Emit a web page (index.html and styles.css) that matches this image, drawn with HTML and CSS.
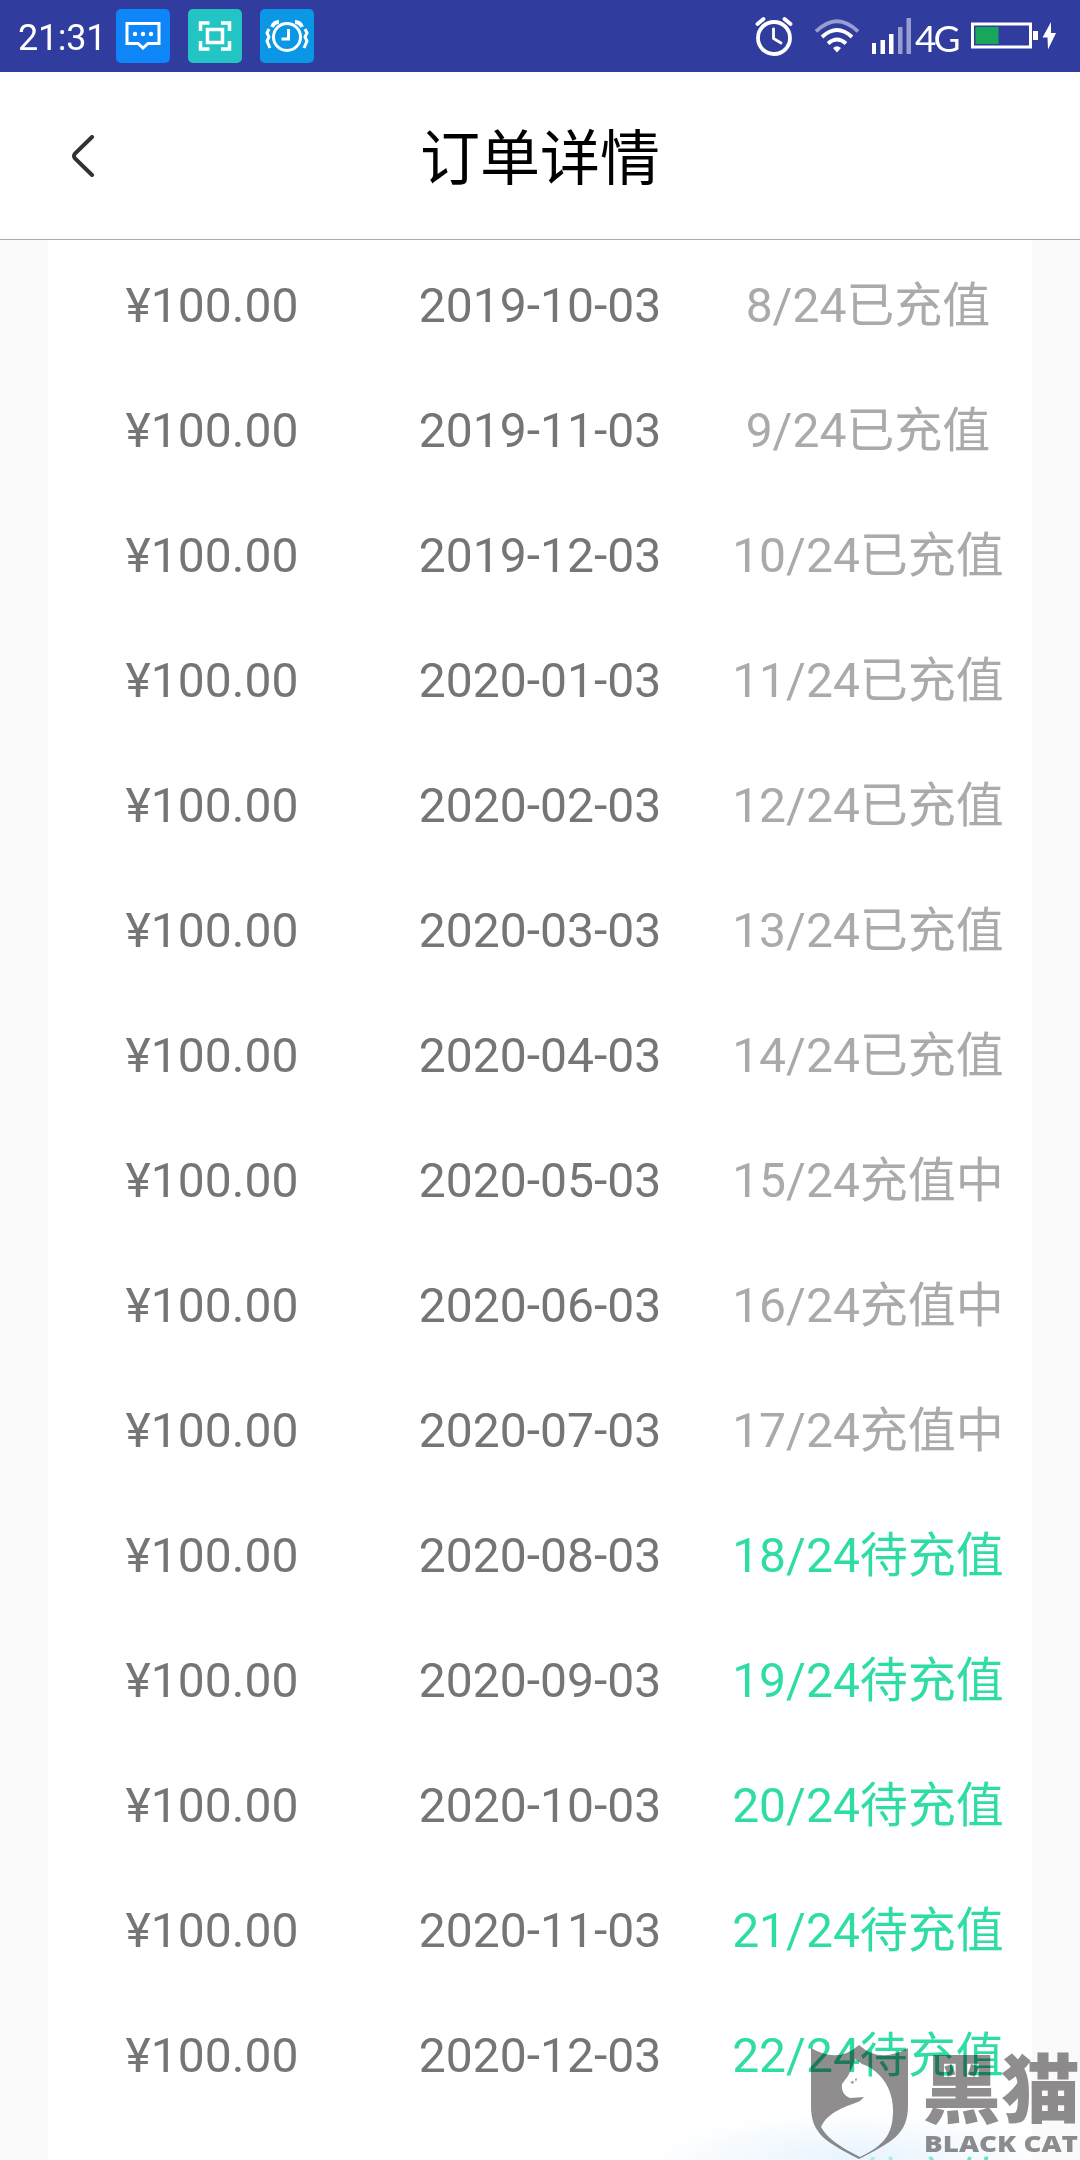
FILE: index.html
```html
<!DOCTYPE html>
<html lang="zh-CN">
<head>
  <meta charset="UTF-8">
  <meta name="viewport" content="width=device-width, initial-scale=1.0">
  <title>订单详情</title>
  <link rel="stylesheet" href="styles.css">
</head>
<body>
  <div class="status-bar">
    <div class="status-left">
      <span class="time">21:31</span>
      <svg class="app-icon" viewBox="0 0 54 54">
        <rect width="54" height="54" rx="5" fill="#0f86f8"/>
        <path d="M11 14.500h32v20h-11l-5 4.500-5-4.500h-11z" fill="none" stroke="#fff" stroke-width="3"/>
        <circle cx="19" cy="25" r="2.200" fill="#fff"/>
        <circle cx="27" cy="25" r="2.200" fill="#fff"/>
        <circle cx="35" cy="25" r="2.200" fill="#fff"/>
      </svg>
      <svg class="app-icon" viewBox="0 0 54 54">
        <rect width="54" height="54" rx="5" fill="#22c4c4"/>
        <g fill="none" stroke="#fff" stroke-width="3.500">
          <path d="M12.500 22v-8h9M33 14h8.500v8M41.500 32v8H33M21.500 40h-9v-8"/>
          <rect x="19.500" y="20.500" width="15" height="13"/>
        </g>
      </svg>
      <svg class="app-icon" viewBox="0 0 54 54">
        <rect width="54" height="54" rx="5" fill="#0a98e6"/>
        <g fill="none" stroke="#fff" stroke-width="3">
          <circle cx="27" cy="28" r="13.500"/>
          <path d="M28.500 20v10h-7"/>
          <path d="M12 18q2-5 7-5M42 18q-2-5-7-5" stroke-width="4"/>
          <path d="M9 20l-2 4 2 4-2 4 3 7M45 20l2 4-2 4 2 4-3 7"/>
        </g>
      </svg>
    </div>
    <div class="status-right">
      <svg class="alarm" viewBox="0 0 38 40">
        <g fill="none" stroke="#fff" stroke-width="3.800" stroke-linecap="round">
          <circle cx="19" cy="22" r="16"/>
          <path d="M18.500 13v9.500l7.500 4.500" stroke-width="2.800"/>
          <path d="M2.500 8l6-5M35.500 8l-6-5"/>
        </g>
      </svg>
      <svg class="wifi" viewBox="0 0 44 34">
        <g fill="none" stroke="#fff" stroke-width="3.800">
          <path d="M1 12.500q21-20.500 42 0" opacity=".5"/>
          <path d="M7 18q15-14 30 0"/>
          <path d="M13 24.500q9-8 18 0"/>
        </g>
        <path d="M18 29q4-3.500 8 0l-4 4.500z" fill="#fff"/>
      </svg>
      <svg class="signal" viewBox="0 0 39 36" fill="#fff">
        <rect x="0" y="25" width="4" height="11"/>
        <rect x="8.500" y="22" width="4.500" height="14"/>
        <rect x="17" y="16" width="4.500" height="20"/>
        <rect x="26" y="9" width="4.500" height="27" opacity=".5"/>
        <rect x="34.500" y="0" width="4.500" height="36" opacity=".5"/>
      </svg>
      <span class="network">4G</span>
      <svg class="battery" viewBox="0 0 85 28">
        <rect x="1.500" y="2" width="58" height="23" fill="none" stroke="#fff" stroke-width="3"/>
        <rect x="4.500" y="5" width="23" height="17" fill="#18a55c"/>
        <rect x="62" y="9" width="5" height="9" fill="#fff"/>
        <path d="M80 0L71.500 15.500h5L77 27.500l8-16.500h-5z" fill="#fff"/>
      </svg>
    </div>
  </div>

  <div class="header">
    <svg class="back" viewBox="0 0 24 42">
      <path d="M21 2L4 18.500q-2 2.500 0 5L21 40" fill="none" stroke="#333" stroke-width="4" stroke-linecap="round"/>
    </svg>
    <h1>订单详情</h1>
  </div>

  <div class="list">
    <div class="row"><span>¥100.00</span><span>2019-10-03</span><span class="done">8/24已充值</span></div>
    <div class="row"><span>¥100.00</span><span>2019-11-03</span><span class="done">9/24已充值</span></div>
    <div class="row"><span>¥100.00</span><span>2019-12-03</span><span class="done">10/24已充值</span></div>
    <div class="row"><span>¥100.00</span><span>2020-01-03</span><span class="done">11/24已充值</span></div>
    <div class="row"><span>¥100.00</span><span>2020-02-03</span><span class="done">12/24已充值</span></div>
    <div class="row"><span>¥100.00</span><span>2020-03-03</span><span class="done">13/24已充值</span></div>
    <div class="row"><span>¥100.00</span><span>2020-04-03</span><span class="done">14/24已充值</span></div>
    <div class="row"><span>¥100.00</span><span>2020-05-03</span><span class="done">15/24充值中</span></div>
    <div class="row"><span>¥100.00</span><span>2020-06-03</span><span class="done">16/24充值中</span></div>
    <div class="row"><span>¥100.00</span><span>2020-07-03</span><span class="done">17/24充值中</span></div>
    <div class="row"><span>¥100.00</span><span>2020-08-03</span><span class="wait">18/24待充值</span></div>
    <div class="row"><span>¥100.00</span><span>2020-09-03</span><span class="wait">19/24待充值</span></div>
    <div class="row"><span>¥100.00</span><span>2020-10-03</span><span class="wait">20/24待充值</span></div>
    <div class="row"><span>¥100.00</span><span>2020-11-03</span><span class="wait">21/24待充值</span></div>
    <div class="row"><span>¥100.00</span><span>2020-12-03</span><span class="wait">22/24待充值</span></div>
    <div class="row"><span>¥100.00</span><span>2021-01-03</span><span class="wait">23/24待充值</span></div>
  </div>

  <div class="glow"></div>
  <svg class="watermark" viewBox="0 0 270 120">
    <path class="shield" d="M1 8Q28 24 49 5Q70 24 98 8V66C98 94 82 102 49 119C16 102 1 94 1 66z"/>
    <path class="cat" d="M45 19l7 5C70 30 83 48 83 70C83 90 78 104 50 117C30 107 17 98 11 87C18 71 38 66 50 61L54 57L40 58C34 56 31 50 32 44L38 36C41 30 43 26 45 19z"/>
    <path class="shield" d="M40 42l4-1-1 3zM45 39l2-1-1 4z"/>
    <text class="name" x="112" y="77" textLength="158" lengthAdjust="spacingAndGlyphs">黑猫</text>
    <text class="brand" x="114" y="112" textLength="154" lengthAdjust="spacingAndGlyphs">BLACK CAT</text>
  </svg>
</body>
</html>
```

FILE: styles.css
```css
body {
  margin: 0;
  height: 2160px;
  overflow: hidden;
  position: relative;
  background-color: #fafafa;
  font-family: Roboto, "Noto Sans CJK SC", sans-serif;
}

.status-bar {
  display: flex;
  justify-content: space-between;
  height: 72px;
  padding: 0 24px 0 18px;
  background-color: #303d9f;
  color: #fff;
}

.status-left,
.status-right {
  display: flex;
  align-items: center;
}

.time {
  width: 98px;
  font-size: 36px;
  line-height: 72px;
  padding-top: 3px;
  letter-spacing: -0.3px;
}

.app-icon {
  width: 54px;
  height: 54px;
  margin-right: 18px;
}

.alarm {
  width: 38px;
  height: 40px;
  margin-right: 22px;
}

.wifi {
  width: 44px;
  height: 34px;
  margin-right: 13px;
}

.signal {
  width: 39px;
  height: 36px;
  margin-right: 4px;
}

.network {
  width: 56px;
  padding-top: 2px;
  font-family: Lato, sans-serif;
  font-size: 37px;
  letter-spacing: -3px;
}

.battery {
  width: 85px;
  height: 28px;
}

.header {
  display: grid;
  grid-template-columns: 72px 1fr 72px;
  align-items: center;
  height: 167px;
  background-color: #fff;
  border-bottom: 1px solid #a9aaaa;
}

.back {
  width: 24px;
  height: 42px;
  margin-left: 71px;
}

h1 {
  margin: 0;
  padding-bottom: 5px;
  text-align: center;
  font-size: 60px;
  font-weight: 400;
  color: #000;
}

.list {
  margin: 0 48px;
  padding-top: 3px;
  background-color: #fff;
}

.row {
  display: grid;
  grid-template-columns: repeat(3, 1fr);
  height: 125px;
  line-height: 125px;
  font-size: 48px;
  text-align: center;
  color: #757575;
}

.row .done {
  color: #aaa;
}

.row .wait {
  color: #30dca5;
}

.glow {
  position: absolute;
  left: 640px;
  bottom: 0;
  width: 392px;
  height: 50px;
  background: radial-gradient(ellipse at 55% 100%, rgba(225, 240, 253, 0.8), rgba(255, 255, 255, 0) 68%);
}

.watermark {
  position: absolute;
  left: 810px;
  top: 2040px;
  width: 270px;
  height: 120px;
  mix-blend-mode: multiply;
}

.shield,
.name,
.brand {
  fill: #8f8d8e;
}

.cat {
  fill: #fff;
}

.name {
  font-family: "Noto Sans CJK SC", sans-serif;
  font-size: 75px;
  font-weight: 900;
}

.brand {
  font-family: "Open Sans", sans-serif;
  font-size: 23px;
  font-weight: 800;
}
```
